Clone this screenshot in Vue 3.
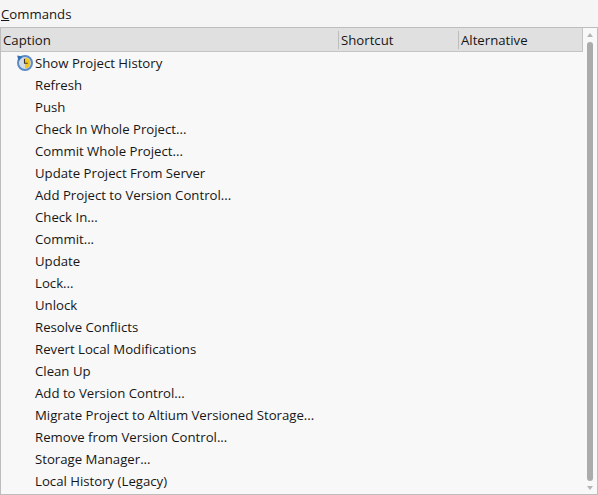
<script setup>
const commands = [
  'Show Project History', 'Refresh', 'Push', 'Check In Whole Project...', 'Commit Whole Project...',
  'Update Project From Server', 'Add Project to Version Control...', 'Check In...', 'Commit...', 'Update',
  'Lock...', 'Unlock', 'Resolve Conflicts', 'Revert Local Modifications', 'Clean Up', 'Add to Version Control...',
  'Migrate Project to Altium Versioned Storage...', 'Remove from Version Control...', 'Storage Manager...', 'Local History (Legacy)'
]
</script>

<template>
  <div class="page">
    <div class="label"><span class="key">C</span>ommands</div>
    <div class="box">
      <div class="main">
        <div class="header">
          <div class="col caption">Caption</div>
          <div class="col shortcut">Shortcut</div>
          <div class="col alternative">Alternative</div>
        </div>
        <div class="rows">
          <div v-for="(c, i) in commands" :key="c" class="row">
            <svg v-if="i === 0" class="icon" viewBox="0 0 17 17" width="17" height="17">
              <circle cx="9" cy="9" r="7" fill="#d3dbe4" stroke="#5b8cc4" stroke-width="2" />
              <path d="M9 9V3.8A5.2 5.2 0 0 1 9 14.2z" fill="#f5c518" />
              <path d="M8.5 4.8V9.3h3.2" fill="none" stroke="#3d3628" stroke-width="1.1" />
              <path d="M1.2 1.5l5.5 1L2.4 6.8z" fill="#2f6db5" />
            </svg>
            <span class="text">{{ c }}</span>
          </div>
        </div>
      </div>
      <div class="scrollbar">
        <span class="arrow up"></span>
        <span class="thumb"></span>
        <span class="arrow down"></span>
      </div>
    </div>
  </div>
</template>

<style>
html, body { margin: 0; background: #f5f5f5; }
</style>

<style scoped>
.page {
  width: 598px;
  height: 495px;
  box-sizing: border-box;
  background: #f5f5f5;
  color: #161616;
  font-family: "Open Sans", sans-serif;
  font-size: 13.2px;
  overflow: hidden;
}
.label { height: 27px; line-height: 29px; padding-left: 1px; }
.key { text-decoration: underline; }
.box {
  height: 468px;
  box-sizing: border-box;
  border: 1px solid #bdbdbd;
  background: #f8f8f8;
  display: flex;
}
.main { flex: 1; min-width: 0; }
.header {
  height: 24px;
  box-sizing: border-box;
  background: #e0e0e0;
  border-bottom: 1px solid #c4c4c4;
  border-right: 1px solid #c4c4c4;
  display: flex;
  align-items: center;
}
.col { height: 18px; line-height: 18px; box-sizing: border-box; padding-left: 2px; }
.caption { width: 337px; }
.shortcut { width: 120px; border-left: 1px solid #bdbdbd; }
.alternative { flex: 1; border-left: 1px solid #bdbdbd; }
.row {
  height: 22px;
  line-height: 22px;
  padding-left: 34px;
  position: relative;
}
.icon { position: absolute; left: 15px; top: 2px; }
.scrollbar {
  width: 14px;
  flex: none;
  display: flex;
  flex-direction: column;
  align-items: center;
  padding: 5px 0 4px;
  box-sizing: border-box;
}
.arrow { width: 0; height: 0; border-left: 3px solid transparent; border-right: 3px solid transparent; flex: none; }
.up { border-bottom: 4px solid #b4b4b4; }
.down { border-top: 4px solid #b4b4b4; }
.thumb { flex: 1; width: 6px; margin: 5px 0; background: #ababab; border-radius: 3px; }
</style>
